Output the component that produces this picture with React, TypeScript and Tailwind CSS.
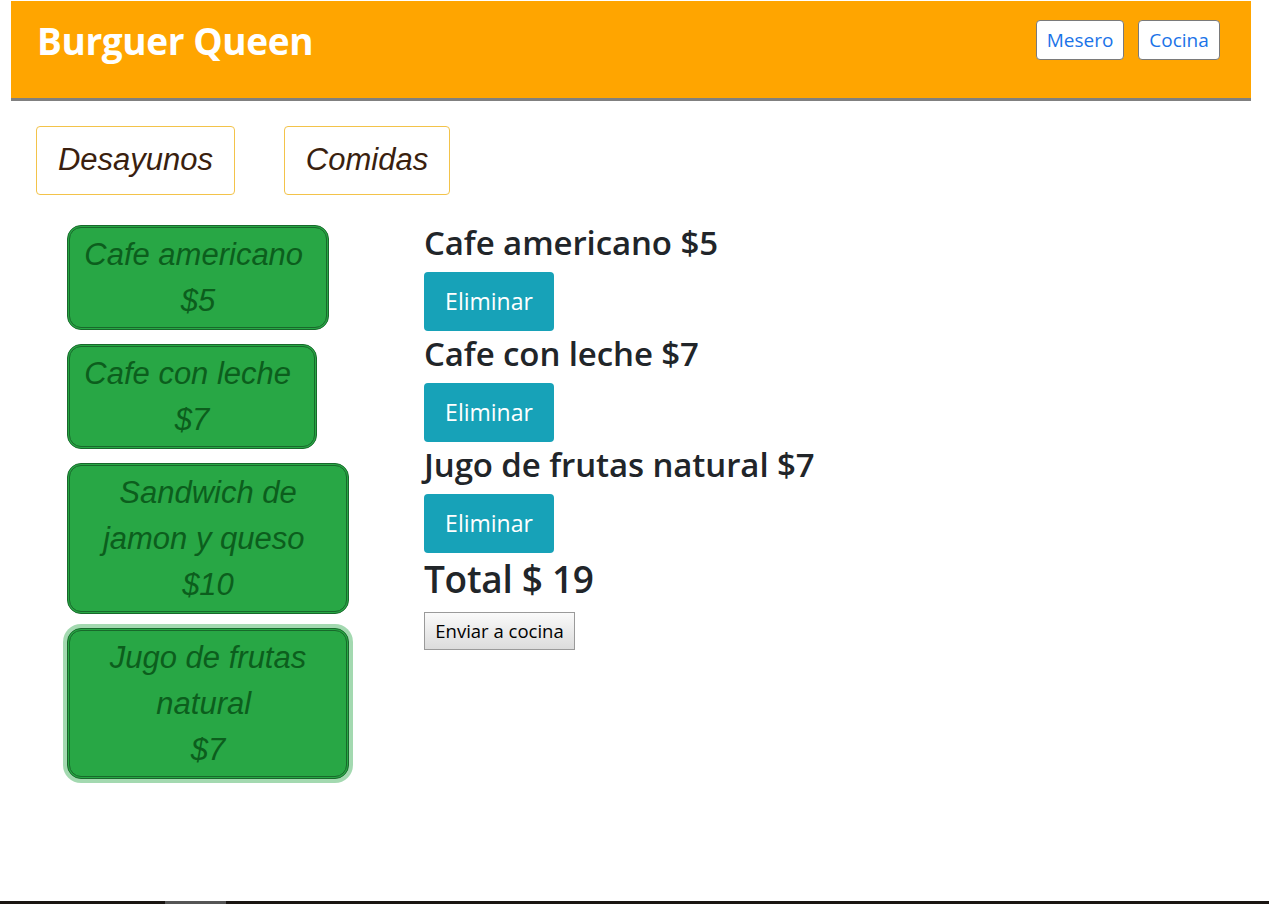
import React from "react";

const sans = { fontFamily: '"Open Sans", "Noto Sans", sans-serif' };
const arial = { fontFamily: '"Liberation Sans", Arial, sans-serif' };

const cards = [
  { lines: ["Cafe americano\u00a0", "$5"], w: "w-[262px]" },
  { lines: ["Cafe con leche\u00a0", "$7"], w: "w-[250px]" },
  { lines: ["Sandwich de", "jamon y queso\u00a0", "$10"], w: "w-[282px]" },
  { lines: ["Jugo de frutas", "natural\u00a0", "$7"], w: "w-[282px]", focus: true },
];

const orders = ["Cafe americano $5", "Cafe con leche $7", "Jugo de frutas natural $7"];

export default function App() {
  return (
    <div className="h-[904px] flex flex-col bg-white" style={sans}>
      <header className="ml-[11px] mt-[1px] w-[1240px] h-[100px] bg-[#ffa500] border-b-[3px] border-[#808080] flex items-start justify-between pl-[26px] pr-[31px]">
        <h1 className="text-white font-bold text-[37px] leading-[48px] mt-[16px] tracking-[-0.4px]">Burguer Queen</h1>
        <div className="flex gap-[14px] mt-[19px]">
          <button className="h-[40px] w-[88px] bg-white border border-[#7a7a7a] rounded-[4px] text-[#1a73e8] text-[19px]">Mesero</button>
          <button className="h-[40px] w-[82px] bg-white border border-[#7a7a7a] rounded-[4px] text-[#1a73e8] text-[19px]">Cocina</button>
        </div>
      </header>

      <div className="flex gap-[49px] ml-[36px] mt-[25px]">
        <button className="h-[69px] w-[199px] border border-[#f3c34a] rounded-[4px] text-[#3a1f0f] italic text-[31px]" style={arial}>Desayunos</button>
        <button className="h-[69px] w-[166px] border border-[#f3c34a] rounded-[4px] text-[#3a1f0f] italic text-[31px]" style={arial}>Comidas</button>
      </div>

      <div className="flex mt-[25px]">
        <div className="ml-[67px] w-[357px] flex flex-col items-start gap-[14px] pt-[5px]">
          {cards.map((c, i) => (
            <div
              key={i}
              className={`${c.w} bg-[#28a745] border-[3px] border-double border-[#18692b] rounded-[14px] pt-[4px] pb-[3px] text-center italic text-[31px] leading-[46px] text-[#0c5e1d] ${c.focus ? "shadow-[0_0_0_4px_rgba(72,180,97,0.5)]" : ""}`}
              style={arial}
            >
              {c.lines.map((l, j) => (
                <div key={j}>{l}</div>
              ))}
            </div>
          ))}
        </div>

        <div className="flex flex-col items-start">
          {orders.map((o, i) => (
            <div key={i} className="flex flex-col items-start">
              <h3 className="text-[33px] font-semibold leading-[46px] text-[#212529] mb-[6px] tracking-[-0.1px]">{o}</h3>
              <button className="w-[130px] h-[59px] bg-[#17a2b8] rounded-[4px] text-white text-[23px]">Eliminar</button>
            </div>
          ))}
          <h2 className="text-[37px] font-semibold leading-[52px] text-[#212529] mt-[0px] mb-[7px] tracking-[-0.3px]">Total $ 19</h2>
          <button className="h-[38px] w-[151px] border border-[#9a9a9a] bg-gradient-to-b from-[#fafafa] to-[#dcdcdc] text-[18.5px] text-black">Enviar a cocina</button>
        </div>
      </div>

      <div className="mt-auto h-[3px] bg-[#1a1512] flex">
        <div className="ml-[165px] w-[61px] bg-[#555]" />
      </div>
    </div>
  );
}
